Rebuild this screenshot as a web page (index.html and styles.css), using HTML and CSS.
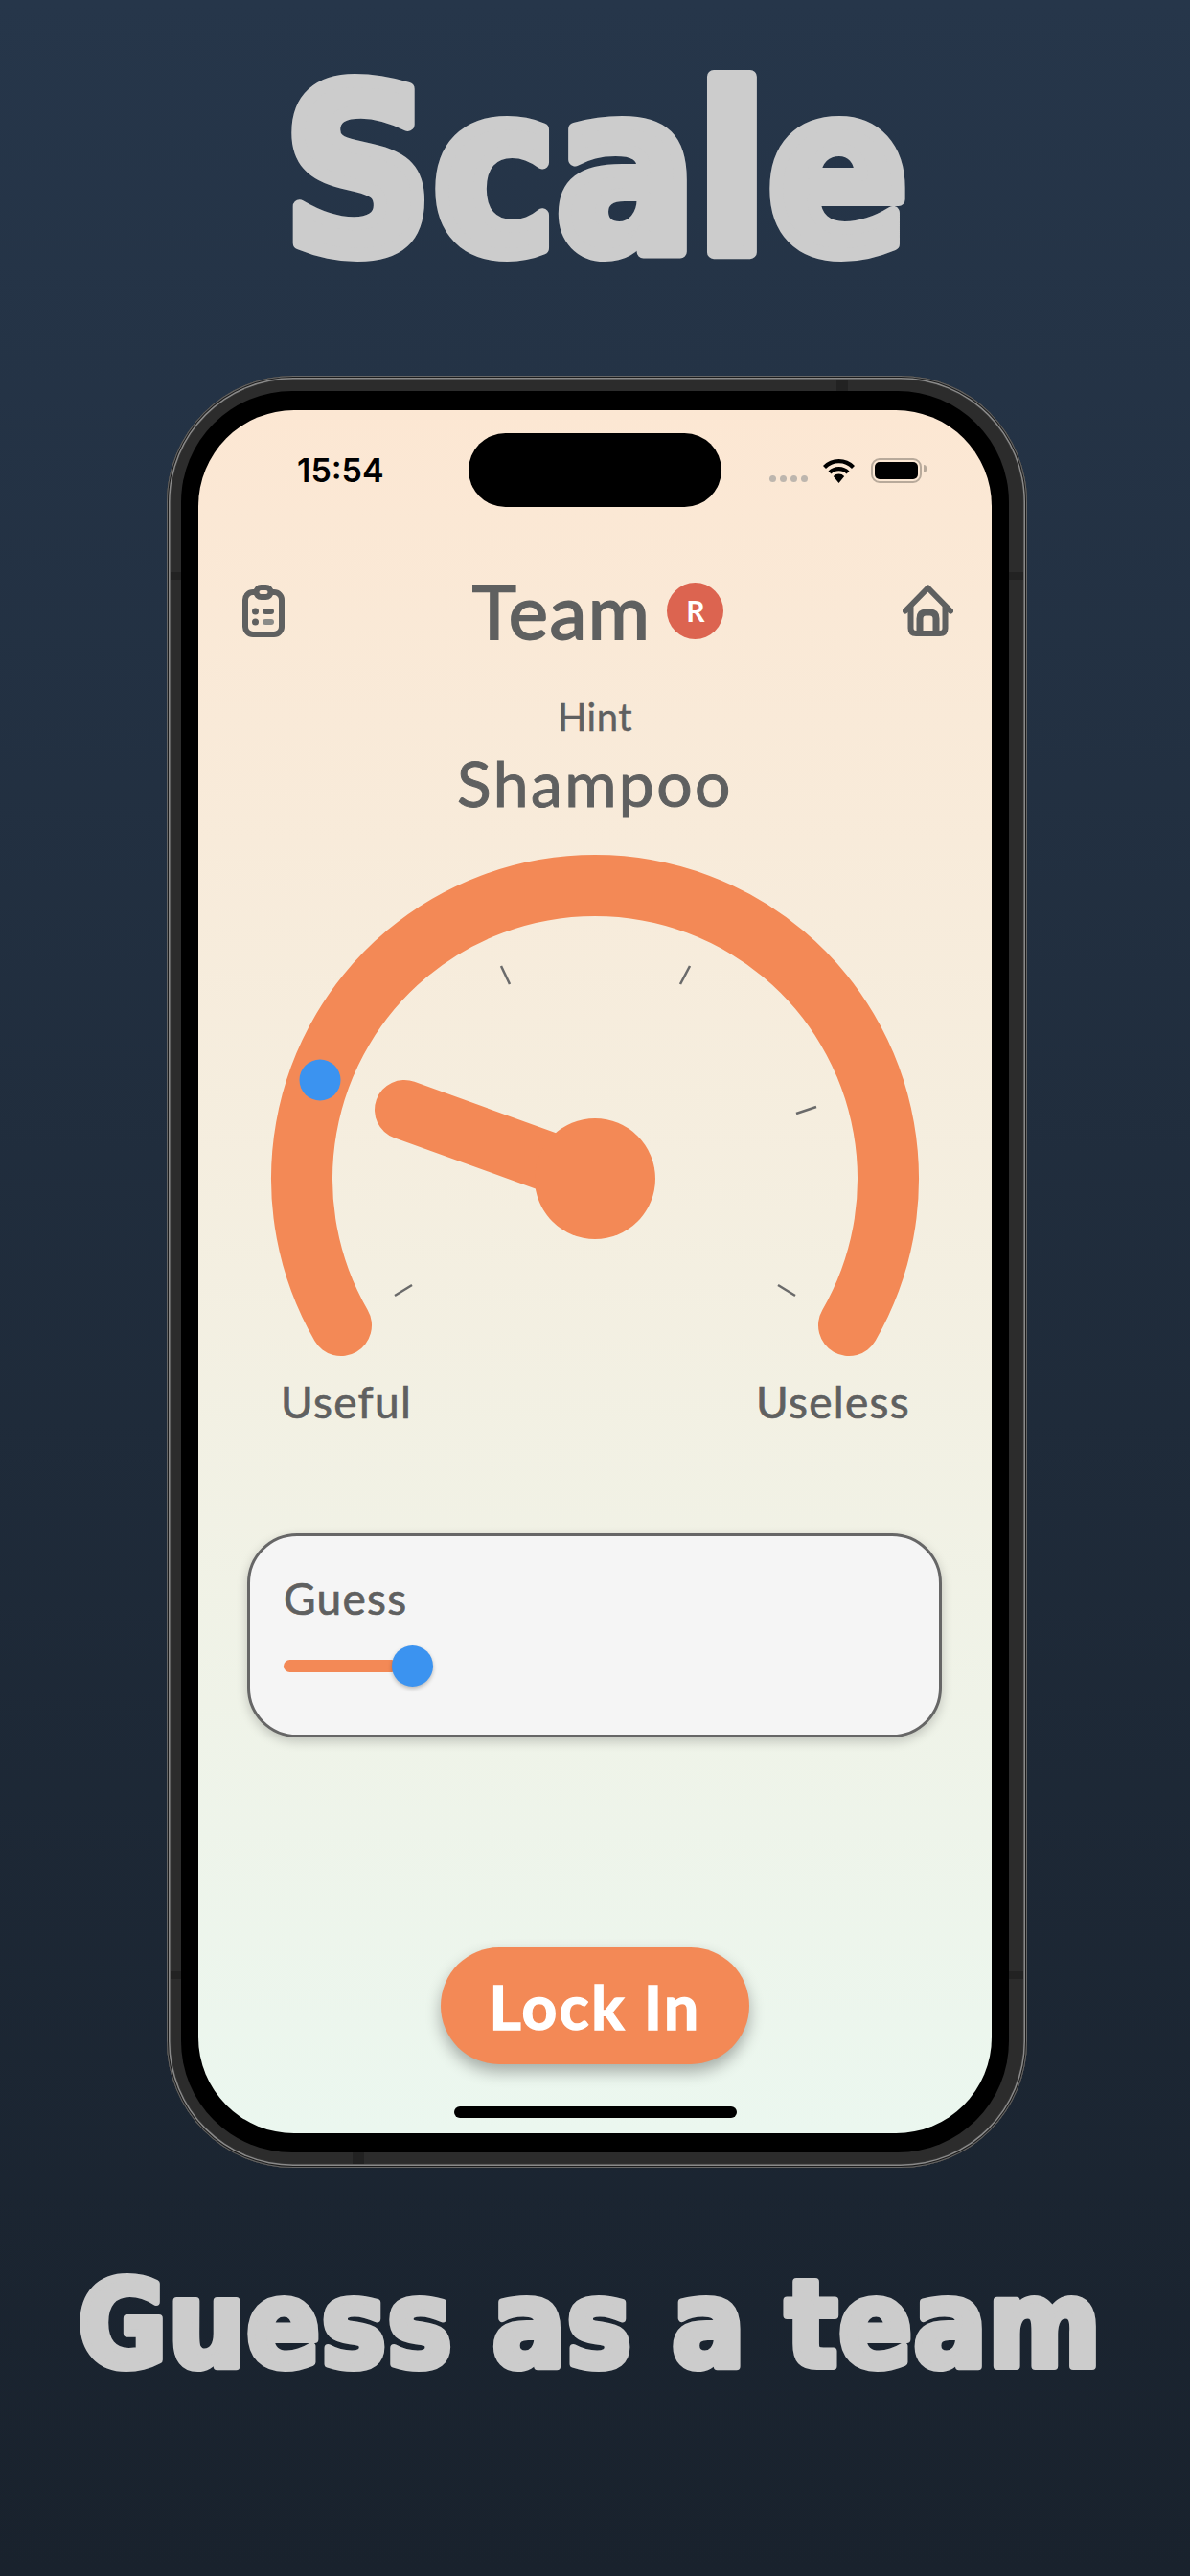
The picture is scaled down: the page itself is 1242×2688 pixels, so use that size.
FILE: index.html
```html
<!DOCTYPE html>
<html lang="en">
<head>
    <title>Scale</title>
    <link rel="stylesheet" href="styles.css">
</head>
<body>
    <svg class="headline" viewBox="0 0 1242 392">
        <text class="headline-text" x="622" y="263">Scale</text>
    </svg>
    <div class="phone">
        <span class="band band-top"></span>
        <span class="band band-bottom"></span>
        <span class="band band-left"></span>
        <span class="band band-left2"></span>
        <span class="band band-right"></span>
        <span class="band band-right2"></span>
        <div class="bezel">
            <div class="screen">
                <div class="status">
                    <span class="time">15:54</span>
                    <div class="island"></div>
                    <div class="status-icons">
                        <div class="signal"><i></i><i></i><i></i><i></i></div>
                        <svg class="wifi" viewBox="0 0 35 26">
                            <path d="M2.500 9.500a21 21 0 0 1 30 0M8 15a13.500 13.500 0 0 1 19 0" fill="none" stroke="#000" stroke-width="4.200"/>
                            <path d="M11.800 19a8 8 0 0 1 11.400 0L17.500 26z" fill="#000"/>
                        </svg>
                        <div class="battery"><div class="battery-fill"></div></div>
                    </div>
                </div>

                <div class="topbar">
                    <svg class="icon-clip" viewBox="0 0 44 55">
                        <rect x="3" y="8" width="38" height="44" rx="8" fill="none" stroke="#5f6060" stroke-width="6"/>
                        <rect x="14.500" y="3" width="15" height="10" rx="5" fill="#fce7d3" stroke="#5f6060" stroke-width="6"/>
                        <circle cx="13.500" cy="28" r="3.500" fill="#5f6060"/>
                        <rect x="21" y="25" width="12" height="6" rx="3" fill="#5f6060"/>
                        <circle cx="13.500" cy="39" r="3.500" fill="#5f6060"/>
                        <rect x="21" y="36" width="12" height="6" rx="3" fill="#8b8b88"/>
                    </svg>
                    <div class="team">
                        <span class="team-name">Team</span>
                        <span class="badge">R</span>
                    </div>
                    <svg class="icon-home" viewBox="0 0 53 54">
                        <path d="M3 27.500L26.500 3.500L50 27.500" fill="none" stroke="#5f6060" stroke-width="6" stroke-linecap="round" stroke-linejoin="round"/>
                        <path d="M8.500 24V45.500Q8.500 51 14 51H39Q44.500 51 44.500 45.500V24" fill="none" stroke="#5f6060" stroke-width="6" stroke-linecap="round"/>
                        <path d="M18 51V35.500Q18 29 24.500 29H28.500Q35 29 35 35.500V51" fill="none" stroke="#5f6060" stroke-width="7"/>
                    </svg>
                </div>

                <div class="hint">Hint</div>
                <div class="hint-word">Shampoo</div>

                <svg class="gauge" viewBox="0 0 828 550">
                    <g stroke="#6a6a6a" stroke-width="2.500">
                        <line x1="205" y1="472" x2="223" y2="461"/>
                        <line x1="186" y1="276" x2="204" y2="282"/>
                        <line x1="325" y1="147" x2="316" y2="128"/>
                        <line x1="503" y1="147" x2="513" y2="128"/>
                        <line x1="624" y1="282" x2="645" y2="275"/>
                        <line x1="605" y1="461" x2="623" y2="472"/>
                    </g>
                    <path d="M149 503A306 306 0 1 1 679 503" fill="none" stroke="#f38956" stroke-width="64" stroke-linecap="round"/>
                    <line x1="414" y1="350" x2="215" y2="278" stroke="#f38956" stroke-width="62" stroke-linecap="round"/>
                    <circle cx="414" cy="350" r="63" fill="#f38956"/>
                    <circle cx="127" cy="247" r="21.500" fill="#3b93f0"/>
                </svg>

                <div class="scale-labels">
                    <span>Useful</span>
                    <span>Useless</span>
                </div>

                <div class="guess-card">
                    <div class="guess-label">Guess</div>
                    <div class="slider">
                        <div class="slider-track"></div>
                        <div class="slider-thumb"></div>
                    </div>
                </div>

                <button class="lock-btn">Lock In</button>
                <div class="home-bar"></div>
            </div>
        </div>
    </div>
    <svg class="caption" viewBox="0 0 1242 426">
        <text class="caption-text" x="616" y="207">Guess as a team</text>
    </svg>
</body>
</html>
```

FILE: styles.css
```css
body {
    margin: 0;
    height: 2688px;
    overflow: hidden;
    background: linear-gradient(180deg, #26364a 0%, #19222d 100%);
    font-family: "Lato", "Noto Sans", sans-serif;
    color: #5f6060;
}
.headline, .caption {
    display: block;
    width: 1242px;
}
.headline {
    height: 392px;
}
.caption {
    height: 426px;
}
.headline-text, .caption-text {
    font-family: "DejaVu Sans Condensed", "DejaVu Sans", sans-serif;
    font-stretch: condensed;
    font-weight: 700;
    text-anchor: middle;
    fill: #cccccc;
    stroke: #cccccc;
    stroke-linejoin: round;
}
.headline-text {
    font-size: 241px;
    stroke-width: 14px;
}
.caption-text {
    font-size: 125px;
    letter-spacing: 1.800px;
    stroke-width: 8px;
}
.phone {
    position: relative;
    width: 898px;
    height: 1870px;
    box-sizing: border-box;
    margin-left: 174px;
    padding: 16px 19px 16px 15px;
    border-radius: 132px;
    background: #2c2c2c;
    box-shadow: inset 0 0 0 1px #666, inset 0 0 0 2px #1c1c1c, inset 0 0 0 3.500px #8a8a8a, inset 0 0 0 4.500px #333;
}
.band {
    position: absolute;
    background: #222;
}
.band-top {
    top: 4px;
    left: 699px;
    width: 12px;
    height: 12px;
}
.band-bottom {
    bottom: 4px;
    left: 194px;
    width: 12px;
    height: 12px;
}
.band-left, .band-left2 {
    left: 4px;
    width: 11px;
    height: 8px;
}
.band-right, .band-right2 {
    right: 4px;
    width: 15px;
    height: 8px;
}
.band-left, .band-right {
    top: 205px;
}
.band-left2, .band-right2 {
    top: 1665px;
}
.bezel {
    height: 100%;
    box-sizing: border-box;
    padding: 20px 18px;
    border-radius: 116px;
    background: #000;
}
.screen {
    height: 100%;
    display: flex;
    flex-direction: column;
    border-radius: 100px;
    background: linear-gradient(180deg, #fce7d3 0%, #ebf7ef 100%);
    overflow: hidden;
}
.status {
    display: grid;
    grid-template-columns: 1fr 264px 1fr;
    align-items: center;
    padding-top: 24px;
}
.time {
    padding-left: 103px;
    font-family: "Inter", sans-serif;
    font-size: 34px;
    font-weight: 600;
    color: #000;
}
.island {
    height: 77px;
    border-radius: 39px;
    background: #000;
}
.status-icons {
    display: flex;
    justify-content: flex-end;
    align-items: center;
    padding-right: 73px;
}
.signal {
    display: flex;
    gap: 4px;
    margin-top: 18px;
    margin-right: 15px;
}
.signal i {
    width: 7px;
    height: 7px;
    border-radius: 50%;
    background: #bdb6ae;
}
.wifi {
    width: 35px;
    height: 26px;
    margin-right: 16px;
}
.battery {
    position: relative;
    width: 53px;
    height: 26px;
    box-sizing: border-box;
    padding: 2px;
    border: 2px solid #b8aa9b;
    border-radius: 9px;
}
.battery:after {
    content: "";
    position: absolute;
    right: -7px;
    top: 5px;
    width: 3px;
    height: 8px;
    border-radius: 0 3px 3px 0;
    background: #b8aa9b;
}
.battery-fill {
    height: 100%;
    border-radius: 5px;
    background: #000;
}
.topbar {
    display: grid;
    grid-template-columns: 1fr auto 1fr;
    align-items: center;
    height: 60px;
    margin-top: 78px;
    padding: 0 40px 0 46px;
}
.icon-clip {
    width: 44px;
    height: 55px;
}
.icon-home {
    width: 53px;
    height: 54px;
    justify-self: end;
}
.team {
    display: flex;
    align-items: center;
    gap: 17px;
}
.team-name {
    font-size: 78px;
    line-height: 60px;
    font-weight: 400;
    letter-spacing: 1.500px;
    -webkit-text-stroke: 1.800px #5f6060;
}
.badge {
    width: 59px;
    height: 59px;
    border-radius: 50%;
    background: #dc6450;
    color: #fff;
    font-size: 30px;
    font-weight: 700;
    line-height: 59px;
    text-align: center;
}
.hint {
    margin-top: 57px;
    text-align: center;
    font-size: 40px;
    line-height: 48px;
    letter-spacing: .5px;
    -webkit-text-stroke: .4px #5f6060;
}
.hint-word {
    margin-top: 10px;
    text-align: center;
    font-size: 66px;
    line-height: 70px;
    letter-spacing: 2.400px;
    -webkit-text-stroke: 1px #5f6060;
}
.gauge {
    display: block;
    width: 828px;
    height: 550px;
    margin-top: 28px;
}
.scale-labels {
    display: flex;
    justify-content: space-between;
    margin-top: 5px;
    padding: 0 85px 0 86px;
    font-size: 46px;
    line-height: 56px;
    letter-spacing: 1.300px;
    -webkit-text-stroke: .7px #5f6060;
}
.guess-card {
    width: 725px;
    height: 213px;
    box-sizing: border-box;
    margin: 109px 0 0 51px;
    padding: 37px 35px 0;
    border: 3.500px solid #666;
    border-radius: 52px;
    background: #f5f5f5;
    box-shadow: 0 4px 12px rgba(0, 0, 0, .2);
}
.guess-label {
    font-size: 46px;
    line-height: 56px;
    letter-spacing: 1.300px;
    -webkit-text-stroke: .7px #5f6060;
}
.slider {
    display: flex;
    align-items: center;
    margin-top: 21px;
}
.slider-track {
    width: 119px;
    height: 13px;
    border-radius: 7px;
    background: #f38956;
}
.slider-thumb {
    width: 43px;
    height: 43px;
    margin-left: -6px;
    border-radius: 50%;
    background: #3b93f0;
    box-shadow: 0 2px 4px rgba(0, 0, 0, .25);
}
.lock-btn {
    display: block;
    width: 322px;
    height: 122px;
    margin: auto auto 0;
    padding: 0;
    border: none;
    border-radius: 61px;
    background: #f38956;
    box-shadow: 0 8px 16px rgba(0, 0, 0, .3);
    color: #fff;
    font-family: "Lato", sans-serif;
    font-size: 64px;
    font-weight: 700;
    letter-spacing: 2.500px;
    -webkit-text-stroke: 1.500px #fff;
}
.home-bar {
    width: 295px;
    height: 12px;
    margin: 44px auto 16px;
    border-radius: 6px;
    background: #000;
}
```
